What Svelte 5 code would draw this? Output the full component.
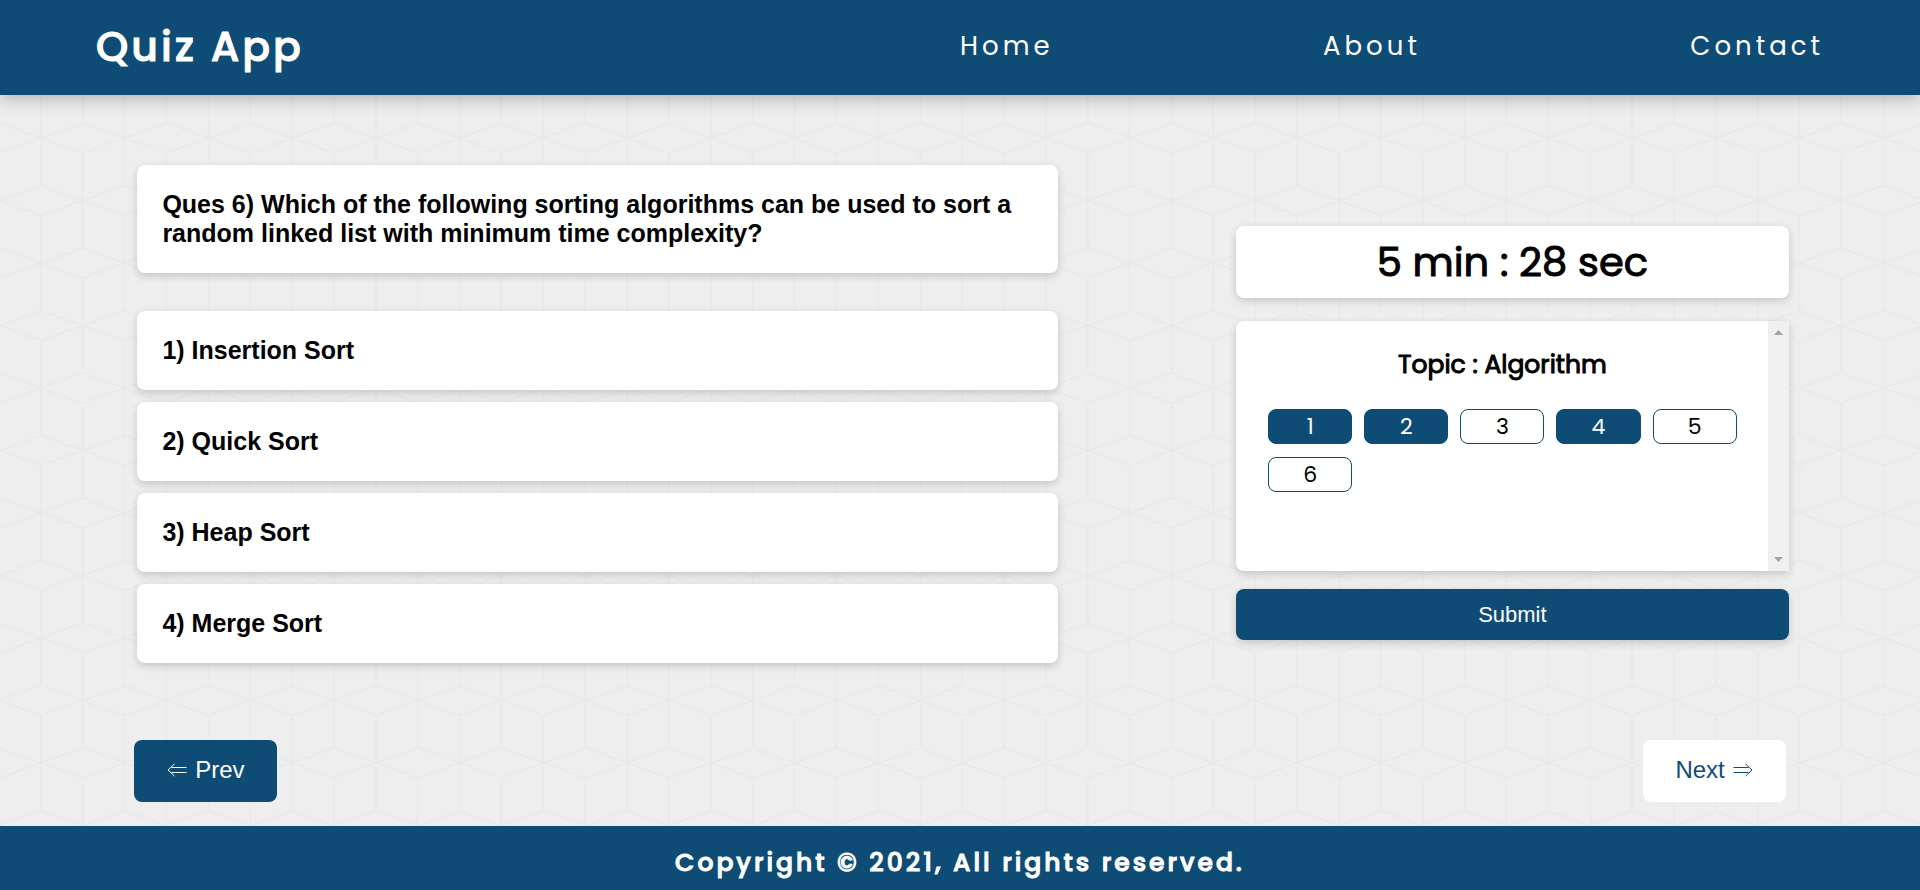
<script>
  const links = ['Home', 'About', 'Contact'];
  const options = ['Insertion Sort', 'Quick Sort', 'Heap Sort', 'Merge Sort'];
  const questionCount = 6;
  const numbers = Array.from({ length: questionCount }, (_, i) => i + 1);

  let answered = $state([1, 2, 4]);
  let current = $state(6);

  function choose() {
    if (!answered.includes(current)) answered.push(current);
  }
</script>

<div class="page">
  <header>
    <h1>Quiz App</h1>
    <nav>
      {#each links as link}
        <a href="#{link.toLowerCase()}">{link}</a>
      {/each}
    </nav>
  </header>

  <main>
    <div class="quiz">
      <section class="question">
        <h2 class="card">
          Ques 6) Which of the following sorting algorithms can be used to sort a random linked list with minimum time complexity?
        </h2>
        <div class="options">
          {#each options as option, i}
            <button class="card option" type="button" onclick={choose}>{i + 1}) {option}</button>
          {/each}
        </div>
      </section>

      <aside>
        <div class="timer">5 min : 28 sec</div>
        <div class="panel">
          <div class="topic">
            <h3>Topic : Algorithm</h3>
            <div class="numbers">
              {#each numbers as n}
                <button type="button" class:done={answered.includes(n)} onclick={() => (current = n)}>{n}</button>
              {/each}
            </div>
          </div>
          <div class="track" aria-hidden="true">
            <svg width="9" height="5" viewBox="0 0 9 5"><path d="M4.5 0 9 5H0z" fill="#a3a3a3" /></svg>
            <svg width="9" height="5" viewBox="0 0 9 5"><path d="M4.5 5 0 0h9z" fill="#a3a3a3" /></svg>
          </div>
        </div>
        <button class="submit" type="button">Submit</button>
      </aside>
    </div>

    <div class="pager">
      <button class="prev" type="button">
        <svg width="20" height="14" viewBox="0 0 20 14" aria-hidden="true">
          <path d="M19.5 4.5H4.5M19.5 9.5H4.5M7.5 1 1 7l6.5 6" />
        </svg>
        Prev
      </button>
      <button class="next" type="button">
        Next
        <svg width="20" height="14" viewBox="0 0 20 14" aria-hidden="true">
          <path d="M.5 4.5h15M.5 9.5h15M12.5 1 19 7l-6.5 6" />
        </svg>
      </button>
    </div>
  </main>

  <footer>Copyright © 2021, All rights reserved.</footer>
</div>

<style>
  :global(body) {
    margin: 0;
  }

  .page {
    --blue: #0f4c75;
    --display: Poppins, Inter, sans-serif;
    --shadow: 0 3px 8px rgba(0, 0, 0, 0.17);
    display: flex;
    flex-direction: column;
    min-height: 100vh;
    font-family: Arial, 'Liberation Sans', sans-serif;
    color: #000;
    background-color: #eee;
    background-image: url("data:image/svg+xml,%3Csvg xmlns='http://www.w3.org/2000/svg' width='335' height='125'%3E%3Cdefs%3E%3Cpattern id='p' width='83.75' height='125' patternUnits='userSpaceOnUse'%3E%3Cpath d='M0 15V110M83.75 15V110M41.875 0V47.5M41.875 77.5V125M0 15L41.875 0L83.75 15M0 110L41.875 125L83.75 110M0 62.5L41.875 47.5L83.75 62.5L41.875 77.5Z' fill='none' stroke='%23e9e9e9' stroke-width='1.5'/%3E%3C/pattern%3E%3C/defs%3E%3Crect width='335' height='125' fill='url(%23p)'/%3E%3C/svg%3E");
    background-position: -1px 13px;
  }

  button {
    margin: 0;
    font-family: inherit;
    cursor: pointer;
  }

  header {
    display: flex;
    align-items: center;
    justify-content: space-between;
    box-sizing: border-box;
    height: 95px;
    padding: 0 5% 2px;
    color: #fff;
    background: var(--blue);
    box-shadow: 0 4px 16px rgba(0, 0, 0, 0.25);
    font-family: var(--display);
  }

  h1 {
    margin: 0;
    font-size: 41px;
    font-weight: 500;
    letter-spacing: 3px;
  }

  h1,
  h3,
  .timer,
  footer {
    -webkit-text-stroke: 1px currentColor;
  }

  nav {
    display: flex;
    justify-content: space-between;
    width: 50%;
  }

  nav a {
    color: #fff;
    font-size: 26px;
    letter-spacing: 4px;
    text-decoration: none;
  }

  main {
    flex: 1;
    padding: 70px 7% 23px;
  }

  .quiz {
    display: grid;
    grid-template-columns: 5fr 3fr;
    column-gap: 178px;
    margin: 0 -3px 0 3px;
  }

  .card {
    box-sizing: border-box;
    width: 100%;
    margin: 0;
    padding: 25px;
    border: 0;
    border-radius: 8px;
    color: #000;
    background: #fff;
    box-shadow: var(--shadow);
    font-size: 25px;
    font-weight: 700;
    line-height: 29px;
    text-align: left;
  }

  .options {
    display: grid;
    gap: 12px;
    margin-top: 38px;
  }

  aside {
    padding-top: 61px;
  }

  .timer {
    border-radius: 8px;
    background: #fff;
    box-shadow: var(--shadow);
    font: 400 40px/72px var(--display);
    text-align: center;
  }

  .panel {
    display: flex;
    height: 250px;
    margin: 23px 0 18px;
    border-radius: 8px 0 0 8px;
    background: #fff;
    box-shadow: var(--shadow);
  }

  .topic {
    flex: 1;
    padding: 24px 31px 24px 32px;
  }

  h3 {
    margin: 0 0 24px;
    font: 400 25px/40px var(--display);
    text-align: center;
  }

  .numbers {
    display: grid;
    grid-template-columns: repeat(5, 1fr);
    gap: 13px 12px;
  }

  .numbers button {
    height: 35px;
    padding: 0;
    border: 1px solid var(--blue);
    border-radius: 8px;
    color: #000;
    background: #fff;
    font: 400 22px/33px var(--display);
  }

  .numbers .done {
    color: #fff;
    background: var(--blue);
  }

  .track {
    display: flex;
    flex-direction: column;
    align-items: center;
    justify-content: space-between;
    box-sizing: border-box;
    width: 21px;
    padding: 9px 0;
    background: #f0f0f0;
  }

  .submit {
    width: 100%;
    height: 51px;
    border: 0;
    border-radius: 8px;
    color: #fff;
    background: var(--blue);
    box-shadow: var(--shadow);
    font-size: 22px;
  }

  .pager {
    display: flex;
    justify-content: space-between;
    margin-top: 77px;
  }

  .pager button {
    display: flex;
    align-items: center;
    justify-content: center;
    gap: 8px;
    width: 143px;
    height: 62px;
    padding: 0 0 2px;
    border: 0;
    border-radius: 8px;
    font-size: 24px;
  }

  .pager svg {
    fill: none;
    stroke: currentColor;
  }

  .prev {
    color: #fff;
    background: var(--blue);
  }

  .next {
    color: var(--blue);
    background: #fff;
  }

  footer {
    padding: 17px 0 7px;
    color: #fff;
    background: var(--blue);
    font: 500 25px/40px var(--display);
    letter-spacing: 3px;
    text-align: center;
  }
</style>
